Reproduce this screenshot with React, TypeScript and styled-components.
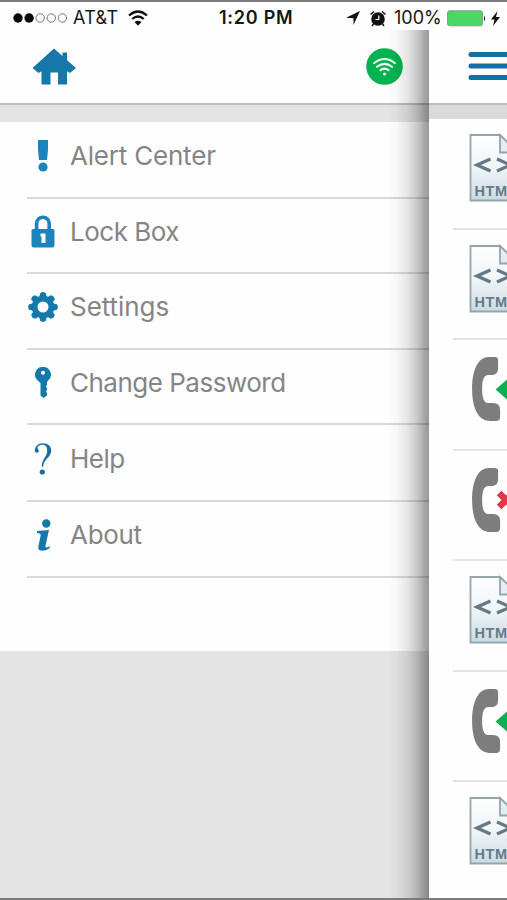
import React from 'react';
import styled, { createGlobalStyle } from 'styled-components';

const Global = createGlobalStyle`
  * { box-sizing: border-box; }
  body { margin: 0; background: #fff; font-family: Inter, "Liberation Sans", sans-serif; }
  svg { display: block; flex: none; }
`;

const Screen = styled.div`
  width: 507px;
  height: 900px;
  display: flex;
  flex-direction: column;
  overflow: hidden;
  background: #fefefe;
  border-top: 2px solid #7b7b7b;
  border-bottom: 2px solid #7b7b7b;
`;

const StatusBar = styled.header`
  height: 28px;
  flex: none;
  display: grid;
  grid-template-columns: 219px 1fr auto;
  align-items: center;
  padding: 4px 7px 0 0;
  color: #161616;
`;

const StatusGroup = styled.div<{ $start?: number }>`
  display: flex;
  align-items: center;
  padding-left: ${p => p.$start ?? 0}px;
`;

const StatusText = styled.span<{ $width: number; $bold?: boolean; $track?: number }>`
  width: ${p => p.$width}px;
  font-size: 18px;
  line-height: 22px;
  font-weight: ${p => (p.$bold ? 600 : 400)};
  letter-spacing: ${p => p.$track ?? 0}px;
  white-space: nowrap;
`;

const Body = styled.div`
  flex: 1;
  display: flex;
  min-height: 0;
`;

const Drawer = styled.aside`
  position: relative;
  width: 429px;
  flex: none;
  background: #e4e4e4;
`;

const EdgeShade = styled.div`
  position: absolute;
  inset: 0 0 0 auto;
  width: 42px;
  pointer-events: none;
  background: linear-gradient(to right, rgba(0,0,0,0), rgba(0,0,0,.03) 25%, rgba(0,0,0,.1) 50%, rgba(0,0,0,.22) 73%, rgba(0,0,0,.36) 92%, rgba(0,0,0,.4));
`;

const TopBar = styled.div<{ $left: number; $right?: number }>`
  height: 75px;
  display: flex;
  align-items: center;
  justify-content: space-between;
  padding: 0 ${p => p.$right ?? 0}px 1px ${p => p.$left}px;
  background: #fefefe;
  border-bottom: 2px solid #bdbdbd;
`;

const Menu = styled.ul`
  list-style: none;
  margin: 17px 0 0;
  padding: 0 0 73px 27px;
  background: #fefefe;
`;

const MenuItem = styled.li<{ $height: number }>`
  height: ${p => p.$height}px;
  display: flex;
  align-items: center;
  padding-bottom: 8px;
  border-bottom: 2px solid #d9d9d9;
`;

const IconSlot = styled.span`
  width: 32px;
  margin-right: 11px;
  display: flex;
  justify-content: center;
`;

const Label = styled.span<{ $track: number }>`
  font-size: 26px;
  line-height: 32px;
  color: #858585;
  letter-spacing: ${p => p.$track}px;
  white-space: nowrap;
`;

const Content = styled.main`
  width: 78px;
  flex: none;
  overflow: hidden;
  background: #fefefe;
`;

const Divider = styled.div`
  height: 14px;
  background: #dadada;
`;

const Feed = styled.ul`
  list-style: none;
  margin: 0;
  padding: 0 0 0 24px;
`;

const FeedItem = styled.li`
  height: 110.5px;
  padding: 14px 0 0 15px;
  border-bottom: 2px solid #e4e4e4;
  &:last-child { border-bottom: 0; }
`;

const blue = '#1d83bb';
const deep = '#1578a9';

const HomeIcon = () => (
  <svg width="44" height="37" viewBox="0 0 44 37" fill={deep}>
    <path d="M22 .5 30.500 8V4.500h4.500v7.800L44 20l-6 5-3-1.800V36.500H26V24.500h-7.500v12H9.500V23.200L6.500 25 .5 20Z" />
  </svg>
);

const Online = () => (
  <svg width="37" height="37" viewBox="0 0 37 37" fill="none" stroke="#effff4" strokeWidth="2.100" strokeLinecap="round">
    <circle cx="18.500" cy="18.500" r="18.300" fill="#04b34f" stroke="none" />
    <path d="M8 15.200Q18.500 6.800 29 15.200M11 18.800q7.500-6 15 0M14.500 22.200q4-3 8 0" />
    <circle cx="18.500" cy="26" r="1.500" fill="#effff4" stroke="none" />
  </svg>
);

const AlertIcon = () => (
  <svg width="12" height="32" viewBox="0 0 12 32" fill={blue}>
    <path d="M1 0h10v10l-1 10H2L1 10Z" /><circle cx="6" cy="27" r="4.600" />
  </svg>
);

const LockIcon = () => (
  <svg width="24" height="33" viewBox="0 0 24 33" fill={blue}>
    <path d="M5.600 16V8.500a6.300 6.300 0 0 1 12.600 0V16" fill="none" stroke={blue} strokeWidth="3.600" />
    <path fillRule="evenodd" d="M2 14h20q1.500 0 1.500 1.500V30q0 2.500-2 2.500h-19Q.5 32.500.5 30V15.500Q.5 14 2 14Zm7.500 4.500v3h1v6.500h4v-9.500Z" />
  </svg>
);

const GearIcon = () => (
  <svg width="30" height="30" viewBox="-15 -15 30 30" fill={deep}>
    {[0, 45, 90, 135, 180, 225, 270, 315].map(a => (
      <path key={a} d="M-4.200-8-2.800-13.800Q0-16 2.800-13.800L4.200-8Z" transform={`rotate(${a})`} />
    ))}
    <circle r="8.400" fill="none" stroke={deep} strokeWidth="5.800" />
  </svg>
);

const KeyIcon = () => (
  <svg width="16" height="31" viewBox="0 0 16 31" fill={deep}>
    <path d="M8 0a7.700 7.700 0 0 1 5 13.700L12 15v3l-1 1.500L12 21v2l-1 1.500L12 26v2.500L8.500 31 5.500 28.500V16L2.800 13.600A7.700 7.700 0 0 1 8 0Z" />
    <circle cx="8" cy="5.800" r="2" fill="#fff" />
  </svg>
);

const HelpIcon = () => (
  <svg width="18" height="32" viewBox="0 0 18 32" fill="#1b6ca0">
    <path d="M.8 7.500C1 3 4.500.2 9 .2c5 0 8.200 3 8.200 7.200 0 3.600-2 5.800-4.200 8.200-2.400 2.700-3.600 4.800-3.800 8.200H7.800c0-4.200 1.200-6.500 3-9.300 1.500-2.300 2.400-4.200 2.400-7C13.200 4 11.500 1.800 8.700 1.800 6 1.800 3.500 3 3.500 4.800c0 1.200 1.300 1.500 1.300 3C4.800 9 4 9.800 2.900 9.800 1.600 9.800.8 8.800.8 7.500Z" />
    <circle cx="8.300" cy="29" r="2.600" />
  </svg>
);

const InfoIcon = () => (
  <svg width="15" height="32" viewBox="0 0 15 32" fill={deep}>
    <circle cx="10.300" cy="4.500" r="4.200" />
    <path d="M1 12Q7 11.500 13 10.900L9.500 26.500q-.4 2 1.100 1.900 1.500-.1 3.200-1.200v1.700q-3.500 2.800-7.200 2.800-5.200 0-4.200-4.500L4.600 16.700q.4-2-1.100-2.200L1 14Z" />
  </svg>
);

const BarsIcon = () => (
  <svg width="50" height="30" viewBox="0 0 50 30" stroke="#156fa6" strokeWidth="5" strokeLinecap="round">
    <path d="M3 3.500h44M3 15h44M3 26.500h44" />
  </svg>
);

const HtmlIcon = () => (
  <svg width="56" height="69" viewBox="0 0 56 69">
    <defs>
      <linearGradient id="sheet" x1="0" y1="0" x2="0" y2="1">
        <stop offset="0" stopColor="#fdfefe" /><stop offset=".5" stopColor="#f0f5f8" /><stop offset="1" stopColor="#c9d9e2" />
      </linearGradient>
    </defs>
    <path d="M2.500 2H32L50 20V67.500H2.500Z" fill="url(#sheet)" stroke="#93a6ac" strokeWidth="1.800" />
    <path d="M32 2V19.500H50Z" fill="#e4edf1" stroke="#93a6ac" strokeWidth="1.800" />
    <path d="M22.500 26 9 32 22.500 38M29 26 42.500 32 29 38" fill="none" stroke="#657984" strokeWidth="3.300" />
    <text x="6.500" y="62.500" fontFamily="Liberation Sans, sans-serif" fontSize="14.500" fontWeight="700" fill="#667b88" textLength="42">HTML</text>
  </svg>
);

const PhoneIcon = ({ missed }: { missed?: boolean }) => (
  <svg width="60" height="69" viewBox="0 0 60 69">
    <g transform="translate(.6 1)">
      <path d="M20 2h6q3.500 0 3.500 3v8q0 7-6 7h-4q-6 0-6 14t6 14h5q7 0 7 7v7q0 4-4 4h-6C9 66 3.500 52 3.500 34S9 2 20 2Z" fill="#7d7d7d" />
      {missed
        ? <path d="m30.500 27 14 14m0-14-14 14" stroke="#dc3b43" strokeWidth="6.500" />
        : <path d="M27 34.500 39 24v6h14v9H39v6Z" fill="#0caf50" />}
    </g>
  </svg>
);

const SignalIcon = () => (
  <svg width="56" height="12" viewBox="0 0 56 12">
    {[0, 1, 2, 3, 4].map(i => (
      <circle key={i} cx={5 + i * 11.1} cy="6" r={i < 2 ? 4.7 : 4.2} fill={i < 2 ? '#080808' : 'none'} stroke={i < 2 ? 'none' : '#777'} strokeWidth="1" />
    ))}
  </svg>
);

const WifiIcon = () => (
  <svg width="20" height="16" viewBox="0 0 20 16" fill="none" stroke="#111" strokeWidth="2.300">
    <path d="M1 5.500Q10-2.500 19 5.500M4.200 9q5.800-5 11.600 0" /><path d="m6.500 12 3.500 3.700 3.500-3.700q-3.500-2.700-7 0Z" fill="#111" stroke="none" />
  </svg>
);

const LocationIcon = () => (
  <svg width="14" height="14" viewBox="0 0 14 14"><path d="M14 0 7.500 14V7.300L0 6.800Z" fill="#111" /></svg>
);

const AlarmIcon = () => (
  <svg width="18" height="17" viewBox="0 0 18 17" fill="none" stroke="#111">
    <circle cx="9" cy="9" r="6.800" fill="#111" stroke="none" />
    <path d="M1.500 4.500 5 1.500M13 1.500l3.500 3M4.500 14 3 16m10.500-2 1.500 2" strokeWidth="1.500" />
    <path d="M9.800 5.500v4H6.500" stroke="#fff" strokeWidth="1.200" />
  </svg>
);

const BatteryIcon = () => (
  <svg width="40" height="17" viewBox="0 0 40 17">
    <rect x=".5" y=".8" width="35" height="15" rx="2" fill="#4bd763" stroke="#8b9b8c" /><path d="M37 5.500q2.500 3 0 6Z" fill="#333" />
  </svg>
);

const BoltIcon = () => (
  <svg width="9" height="15" viewBox="0 0 9 15"><path d="M6.500 0 0 8.500h3.500L2 15l7-9H5Z" fill="#111" /></svg>
);

const Space = styled.span<{ $w: number }>`
  width: ${p => p.$w}px;
`;

const menu = [
  { label: 'Alert Center', icon: <AlertIcon />, height: 77, track: -0.2 },
  { label: 'Lock Box', icon: <LockIcon />, height: 75, track: -0.5 },
  { label: 'Settings', icon: <GearIcon />, height: 76, track: -0.05 },
  { label: 'Change Password', icon: <KeyIcon />, height: 75, track: -0.5 },
  { label: 'Help', icon: <HelpIcon />, height: 77, track: -0.5 },
  { label: 'About', icon: <InfoIcon />, height: 76, track: -0.3 },
];

const feed = ['html', 'html', 'call', 'missed', 'html', 'call', 'html'];

export default function App() {
  return (
    <>
      <Global />
      <Screen>
        <StatusBar>
          <StatusGroup $start={13}>
            <SignalIcon />
            <Space $w={4} />
            <StatusText $width={55} $track={0.3}>AT&amp;T</StatusText>
            <WifiIcon />
          </StatusGroup>
          <StatusText $width={80} $bold $track={0.75}>1:20 PM</StatusText>
          <StatusGroup>
            <LocationIcon />
            <Space $w={9} />
            <AlarmIcon />
            <Space $w={7} />
            <StatusText $width={53}>100%</StatusText>
            <BatteryIcon />
            <Space $w={4} />
            <BoltIcon />
          </StatusGroup>
        </StatusBar>
        <Body>
          <Drawer>
            <TopBar $left={32} $right={26}>
              <HomeIcon />
              <Online />
            </TopBar>
            <Menu>
              {menu.map(item => (
                <MenuItem key={item.label} $height={item.height}>
                  <IconSlot>{item.icon}</IconSlot>
                  <Label $track={item.track}>{item.label}</Label>
                </MenuItem>
              ))}
            </Menu>
            <EdgeShade />
          </Drawer>
          <Content>
            <TopBar $left={39}>
              <BarsIcon />
            </TopBar>
            <Divider />
            <Feed>
              {feed.map((kind, i) => (
                <FeedItem key={i}>
                  {kind === 'html' ? <HtmlIcon /> : <PhoneIcon missed={kind === 'missed'} />}
                </FeedItem>
              ))}
            </Feed>
          </Content>
        </Body>
      </Screen>
    </>
  );
}
